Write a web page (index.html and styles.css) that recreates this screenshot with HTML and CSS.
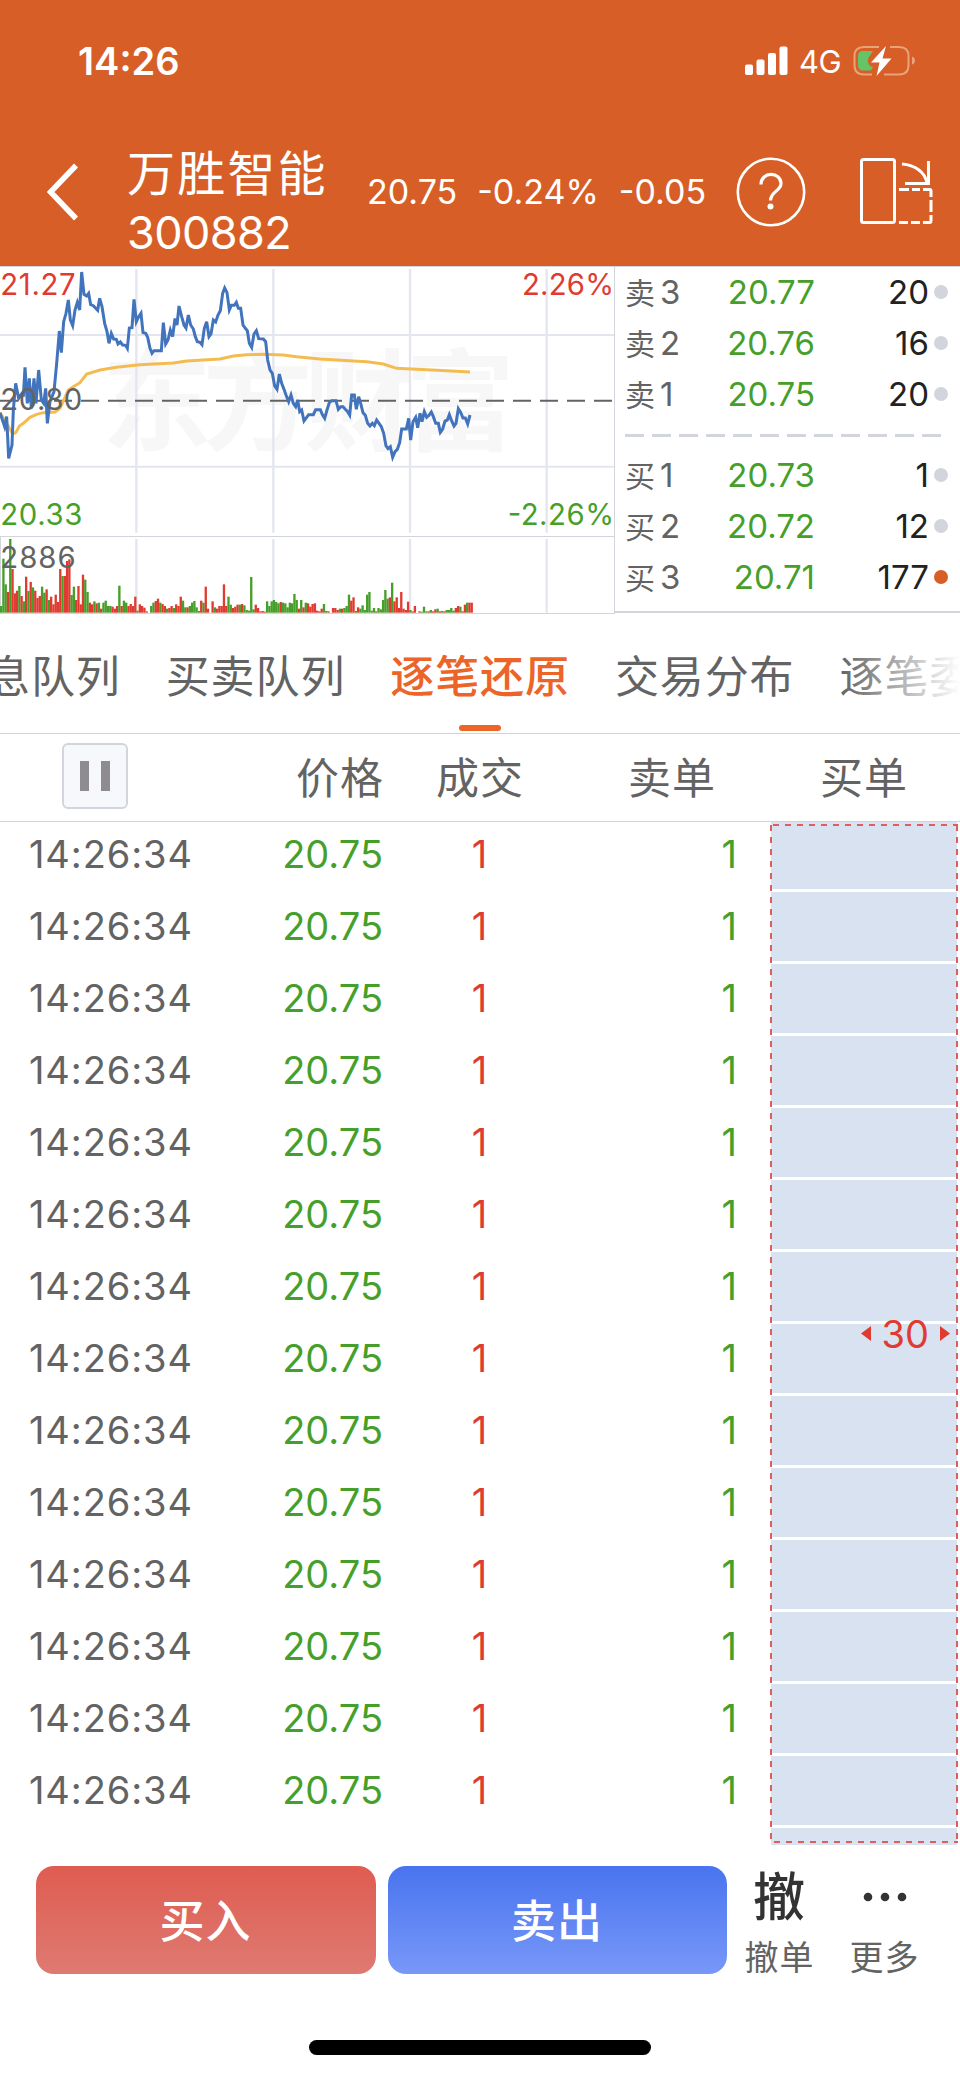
FILE: index.html
```html
<!DOCTYPE html>
<html lang="zh-CN">
    <head>
        <meta charset="UTF-8" />
        <meta name="viewport" content="width=device-width, initial-scale=1.0" />
        <title>万胜智能 300882</title>

        <link rel="stylesheet" href="styles.css">
    </head>

    <body>
        <header>
            <div class="status-bar">
                <span class="clock">14:26</span>
                <div class="status-icons">
                    <svg width="43" height="30" viewBox="0 0 43 30" fill="#fff">
                        <rect x="0" y="18.500" width="8" height="10.500" rx="2" />
                        <rect x="11.500" y="13.500" width="8" height="15.500" rx="2" />
                        <rect x="23" y="7" width="8" height="22" rx="2" />
                        <rect x="34.500" y="0.500" width="8" height="28.500" rx="2" />
                    </svg>
                    <span class="network">4G</span>
                    <svg width="63" height="32" viewBox="0 0 63 32">
                        <path d="M26 2H11Q1.500 2 1.500 11V20Q1.500 29.500 11 29.500H19M31 29.500H46Q55.500 29.500 55.500 20V11Q55.500 2 46 2H37" fill="none" stroke="#e8a27c" stroke-width="2" />
                        <path d="M59 11.500Q62 12.500 62 15.500T59 19.500Z" fill="#e8a27c" />
                        <path d="M10 6H20L16 12Q13 16 17 21L20 22L18 25.500H10Q5 25.500 5 20V11Q5 6 10 6Z" fill="#65c466" />
                        <path d="M33 1L18 17.500H26.500L23.500 31L38.500 13.500H29.500Z" fill="#fff" />
                    </svg>
                </div>
            </div>

            <nav>
                <svg class="back" width="32" height="58" viewBox="0 0 32 58" fill="none" stroke="#fff" stroke-width="5.500">
                    <path d="M29 2.500L3.500 29L29 55.500" />
                </svg>
                <div class="stock">
                    <h1>万胜智能</h1>
                    <p>300882</p>
                </div>
                <div class="quote">
                    <span>20.75</span>
                    <span>-0.24%</span>
                    <span>-0.05</span>
                </div>
                <div class="help">
                    <svg width="70" height="70" viewBox="0 0 70 70" fill="none" stroke="#fff">
                        <circle cx="35" cy="35" r="33.200" stroke-width="2.600" />
                        <path d="M25 27.500C25 14 45 14.500 45 26.500C45 34 34.500 34.500 34.500 43.500" stroke-width="3.200" />
                        <circle cx="34.500" cy="49.500" r="3" fill="#fff" stroke="none" />
                    </svg>
                </div>
                <svg width="73" height="67" viewBox="0 0 73 67" fill="none" stroke="#fff" stroke-width="3">
                    <rect x="1.500" y="1.500" width="33" height="63" rx="2" />
                    <path d="M42 6C55 7 65 14 67 25M68.500 3V25.500H45" />
                    <path d="M39 31.500H49M52 31.500H60M63 31.500H69.500Q71 31.500 71 33V39M71 42V54M71 57V62.500Q71 64.500 69.500 64.500H63M60 64.500H51M48 64.500H39" />
                </svg>
            </nav>
        </header>

        <section class="market">
            <svg class="chart" width="615" height="348" viewBox="0 18 1845 1044">
                <text class="watermark" x="305" y="546" textLength="1240">东方财富</text>
                <g stroke="#e3e6ee" stroke-width="7">
                    <path d="M409 27V818M820 27V818M1230 27V818M1640 27V818" />
                    <path d="M409 837V1058M820 837V1058M1230 837V1058M1640 837V1058" />
                    <path d="M0 225H1842M0 620H1842" stroke-width="6" />
                </g>
                <path d="M0 829.500H1842M0 1060.500H1842M1843.500 18V1062M1.500 829V1060M0 19.500H1845" stroke="#d3d5dd" stroke-width="3" />
                <path d="M0 422.500H1836" stroke="#636363" stroke-width="6" stroke-dasharray="54 27" />
                <g id="volume"></g>
                <polyline class="average" points="0,458 20,490 38,522 48,517 58,498 70,490 90,472 110,463 130,458 165,456 180,445 205,390 220,380 240,368 260,342 300,330 350,322 420,314 520,309 560,303 660,297 700,288 740,284 790,283 850,285 890,290 960,297 1060,303 1100,305 1150,312 1190,325 1250,328 1340,332 1410,336" />
                <polyline class="price-line" points="0,458 14,500 20,470 26,595 36,555 40,450 47,370 56,415 66,400 70,410 75,322 82,430 88,355 94,445 102,355 108,430 116,330 124,420 131,430 137,385 142,490 150,425 162,395 170,310 178,213 184,278 191,185 198,160 205,120 211,180 218,197 225,150 232,127 239,150 245,36 252,103 260,108 266,100 272,134 280,137 293,151 299,115 306,140 314,190 321,215 327,250 334,220 341,237 349,238 354,252 361,246 368,255 377,256 382,265 388,204 396,203 402,118 409,185 415,172 423,160 429,218 437,220 443,232 450,265 456,280 462,272 484,272 490,188 497,252 504,240 511,210 518,230 525,175 531,195 537,138 545,170 552,195 558,204 565,165 572,195 580,207 586,230 592,245 600,247 606,254 613,205 620,185 627,230 633,222 640,180 647,186 654,165 661,152 668,100 674,84 681,98 688,150 694,136 703,136 709,127 715,145 722,145 729,195 736,205 742,212 748,250 755,262 762,222 769,212 776,236 790,237 797,245 803,300 810,330 817,340 824,378 831,388 838,342 845,370 852,388 858,405 866,425 873,405 880,430 887,440 893,420 899,455 905,450 912,483 926,464 940,464 947,449 961,449 967,464 974,475 981,450 988,428 995,422 1008,422 1015,448 1022,440 1029,440 1036,448 1043,455 1049,465 1055,405 1063,405 1069,448 1076,410 1082,430 1089,458 1096,466 1103,490 1110,498 1117,490 1123,497 1130,480 1137,490 1144,500 1151,520 1158,558 1164,566 1171,560 1178,592 1185,575 1192,568 1199,548 1205,507 1219,507 1226,475 1232,540 1239,485 1247,472 1253,503 1260,460 1266,485 1273,455 1280,472 1287,466 1294,456 1300,470 1307,490 1315,490 1321,517 1328,507 1335,483 1342,480 1348,464 1355,483 1362,498 1368,490 1375,446 1382,457 1389,474 1396,474 1403,492 1410,465" />
                <g class="labels">
                    <text x="1" y="104" textLength="226" fill="#e03b31">21.27</text>
                    <text x="1" y="449" textLength="246">20.80</text>
                    <text x="1" y="794" textLength="246" fill="#469f2a">20.33</text>
                    <text x="1" y="923" textLength="226">2886</text>
                    <text x="1566" y="104" textLength="276" fill="#e03b31">2.26%</text>
                    <text x="1523" y="794" textLength="319" fill="#469f2a">-2.26%</text>
                </g>
            </svg>

            <div class="order-book">
                <div class="level"><span class="side">卖</span><span class="num">3</span><span class="price">20.77</span><span class="qty">20</span><i></i></div>
                <div class="level"><span class="side">卖</span><span class="num">2</span><span class="price">20.76</span><span class="qty">16</span><i></i></div>
                <div class="level"><span class="side">卖</span><span class="num">1</span><span class="price">20.75</span><span class="qty">20</span><i></i></div>
                <div class="divider"></div>
                <div class="level"><span class="side">买</span><span class="num">1</span><span class="price">20.73</span><span class="qty">1</span><i></i></div>
                <div class="level"><span class="side">买</span><span class="num">2</span><span class="price">20.72</span><span class="qty">12</span><i></i></div>
                <div class="level"><span class="side">买</span><span class="num">3</span><span class="price">20.71</span><span class="qty">177</span><i class="hot"></i></div>
            </div>
        </section>

        <div class="tabs">
            <span>息队列</span>
            <span>买卖队列</span>
            <span class="active">逐笔还原</span>
            <span>交易分布</span>
            <span>逐笔委</span>
        </div>

        <div class="columns table-head">
            <div class="pause"><b></b><b></b></div>
            <span class="right">价格</span>
            <span>成交</span>
            <span>卖单</span>
            <span>买单</span>
        </div>

        <main>
            <div id="ticks"></div>
            <div class="buy-order">
                <svg width="190" height="1023" fill="none" stroke="#dc5f5b" stroke-width="2">
                    <path d="M3 3H188" stroke-dasharray="6 6" />
                    <path d="M1 3V1020M187 3V1020" stroke-dasharray="6 6" />
                    <path d="M4 1020H188" stroke-dasharray="6 6" />
                </svg>
                <div class="amount">
                    <svg width="10" height="16"><path d="M10 0V15L0 7.500Z" fill="#e03b31" /></svg>
                    <span>30</span>
                    <svg width="10" height="16"><path d="M0 0V15L10 7.500Z" fill="#e03b31" /></svg>
                </div>
            </div>
        </main>

        <footer>
            <div class="trade">
                <button class="buy">买入</button>
                <button class="sell">卖出</button>
                <div class="action">
                    <strong>撤</strong>
                    <span>撤单</span>
                </div>
                <div class="action more">
                    <svg width="44" height="52" viewBox="0 0 44 52" fill="#333">
                        <circle cx="5" cy="26" r="4.300" />
                        <circle cx="22" cy="26" r="4.300" />
                        <circle cx="39" cy="26" r="4.300" />
                    </svg>
                    <span>更多</span>
                </div>
            </div>
            <div class="home-bar"></div>
        </footer>

        <script>
            // positive = red bar, negative = green bar
            const volumes = [
                -20, -162, -85, 62, -221, 131, 58, 66, -80, 50, -34, 108, -65, 92, -76, 66, 44, 50, -78, -60,
                70, -38, 48, 25, 54, 32, 131, -110, 110, 155, 160, -53, -78, 38, 80, 25, 114, -99, -62, 30,
                25, -34, 28, -30, 12, -30, -36, -20, -20, 18, 12, 20, -81, 20, -36, -30, 20, 26, 20, 48,
                -6, 25, 20, 15, 4, 0, -20, -30, 35, 42, -30, 26, 20, -12, 14, 20, -14, 25, 20, 48,
                -36, -16, 16, -20, -30, -35, -16, -5, 36, -30, 78, 12, 0, 34, -16, 12, 20, 20, 85, 20,
                -48, -24, 14, 18, 24, -24, 26, -22, -8, -6, -107, -10, 24, 14, 4, 5, 3, -34, -20, -34,
                -38, -32, -28, 32, -30, -28, -16, -30, -28, -56, -38, 12, -38, 16, -30, 28, 18, 26, 28, 6,
                4, 12, -26, -5, 4, 0, 14, 14, 8, -12, 12, -14, -20, -54, 36, 46, -5, 16, -12, -22,
                -8, -54, -62, -6, -14, 4, -14, -10, -38, -68, -42, 46, -90, 34, 46, 14, 62, 12, 8, 33,
                -8, 4, 20, 0, 4, -3, -18, -4, 4, -8, 4, 10, -12, 4, -5, 4, -8, -8, -14, -6,
                14, 20, -18, 4, 24, -30, 30, 30
            ];
            const volume = document.querySelector('#volume');
            const ticks = document.querySelector('#ticks');

            volume.innerHTML = volumes
                .map((v, i) => {
                    const h = Math.abs(v);
                    const color = v > 0 ? '#e03b31' : '#469f2a';
                    return `<rect x="${(i * 6.82).toFixed(1)}" y="${1058 - h}" width="7" height="${h}" fill="${color}" />`;
                })
                .join('');

            for (let i = 0; i < 14; i++) {
                ticks.innerHTML += `
                    <div class="tick">
                        <span class="time">14:26:34</span>
                        <span class="price">20.75</span>
                        <span class="deal">1</span>
                        <span class="sell-order">1</span>
                    </div>`;
            }
        </script>
    </body>
</html>
```
FILE: styles.css
```css
* {
    margin: 0;
    padding: 0;
    box-sizing: border-box;
}

body {
    width: 960px;
    height: 2079px;
    overflow: hidden;
    background-color: #fff;
    color: #636363;
    font-family: Inter, "Noto Sans CJK SC", sans-serif;
    font-weight: 400;
}

svg {
    display: block;
    flex: none;
}

header {
    height: 266px;
    background-color: #d75f27;
    color: #fff;
}

.status-bar {
    height: 122px;
    padding: 0 44px 0 78px;
    display: flex;
    align-items: center;
    justify-content: space-between;
}

.clock {
    font-size: 38px;
    font-weight: 600;
}

.status-icons {
    display: flex;
    align-items: center;
}

.network {
    width: 41px;
    margin: 0 13px 0 11px;
    font-size: 31px;
    letter-spacing: -0.5px;
}

nav {
    height: 144px;
    padding-left: 47px;
    display: flex;
    align-items: center;
}

nav svg {
    margin-top: -5px;
}

.stock {
    width: 240px;
    margin-left: 48px;
    padding-top: 18px;
}

.stock h1 {
    font-size: 48px;
    font-weight: 400;
    line-height: 60px;
    letter-spacing: 2.2px;
}

.stock p {
    font-size: 45px;
    line-height: 58px;
    letter-spacing: -0.6px;
}

.quote {
    width: 368px;
    margin-top: -5px;
    display: flex;
    gap: 20px;
    font-size: 34px;
    letter-spacing: 0;
    white-space: nowrap;
}

.help {
    margin: 0 54px 0 1px;
}

.market {
    height: 348px;
    display: flex;
}

.watermark {
    font-size: 330px;
    font-weight: 700;
    fill: #f7f7f7;
}

.average {
    fill: none;
    stroke: #f4bc50;
    stroke-width: 9;
}

.price-line {
    fill: none;
    stroke: #4273bd;
    stroke-width: 9;
}

.labels {
    font-size: 88px;
    fill: #636363;
}

.order-book {
    flex: 1;
    height: 347px;
    border-top: 1px solid #d3d5dd;
    border-bottom: 2px solid #d3d5dd;
}

.level {
    height: 51px;
    padding: 0 12px 1px 10px;
    display: flex;
    align-items: center;
    font-size: 33px;
}

.side {
    width: 35px;
    padding-bottom: 2px;
    font-size: 30px;
}

.num {
    width: 40px;
}

.order-book .price {
    width: 115px;
    text-align: right;
}

.qty {
    flex: 1;
    text-align: right;
    color: #222;
}

.level i {
    width: 14px;
    height: 14px;
    margin-left: 5px;
    border-radius: 50%;
    background-color: #d3d5dd;
}

.level .hot {
    background-color: #d75f27;
}

.divider {
    height: 3px;
    margin: 14px 19px 13px 10px;
    background: repeating-linear-gradient(90deg, #d3d5dd 0 19px, transparent 19px 27px);
}

.tabs {
    height: 120px;
    border-bottom: 1px solid #d3d3d3;
    display: flex;
    gap: 45px;
    overflow: hidden;
    position: relative;
    font-size: 44px;
    line-height: 126px;
    letter-spacing: 0.9px;
    white-space: nowrap;
}

.tabs span {
    flex: none;
}

.tabs span:first-child {
    margin-left: -14px;
}

.tabs .active {
    color: #ec6428;
    font-weight: 500;
    position: relative;
}

.tabs .active::after {
    content: "";
    position: absolute;
    left: 69px;
    top: 111px;
    width: 42px;
    height: 6px;
    border-radius: 3px;
    background-color: #ec6428;
}

/* fades out the tab that runs off the screen */
.tabs::after {
    content: "";
    position: absolute;
    right: 0;
    top: 0;
    width: 120px;
    height: 100%;
    background: linear-gradient(90deg, rgba(255, 255, 255, 0), #fff);
}

.columns {
    display: grid;
    grid-template-columns: repeat(5, 192px);
    align-items: center;
    text-align: center;
}

.table-head {
    height: 88px;
    padding-bottom: 4px;
    border-bottom: 1px solid #d3d3d3;
    font-size: 43px;
    letter-spacing: 1px;
}

.table-head span {
    margin-top: -2px;
}

.right {
    text-align: right;
}

.pause {
    width: 66px;
    height: 66px;
    margin-left: 62px;
    border: 2px solid #d3d5dd;
    border-radius: 6px;
    background-color: #f7f8fb;
    display: flex;
    align-items: center;
    justify-content: center;
    gap: 12px;
}

.pause b {
    width: 9px;
    height: 30px;
    background-color: #8e8c91;
}

main {
    height: 1023px;
    display: flex;
}

#ticks {
    width: 771px;
    margin-top: -4px;
}

.tick {
    height: 72px;
    display: grid;
    grid-template-columns: 192px 192px 192px 192px;
    align-items: center;
    font-size: 38px;
}

.time {
    padding-left: 29px;
    letter-spacing: 0.9px;
}

.tick .price {
    padding-right: 1px;
    text-align: right;
}

.price,
.sell-order {
    color: #469f2a;
}

.deal {
    padding-right: 1px;
    text-align: center;
    color: #e03b31;
}

.sell-order {
    padding-right: 31px;
    text-align: right;
}

.buy-order {
    width: 186px;
    position: relative;
    background: repeating-linear-gradient(#d9e2f0 0 69px, #fff 69px 72px) 0 -2px;
    background-size: 186px 1100px;
}

.buy-order > svg {
    position: absolute;
    left: -1px;
    top: 0;
}

.amount {
    position: absolute;
    right: 7px;
    top: 489px;
    display: flex;
    align-items: center;
    gap: 11px;
    color: #e03b31;
    font-size: 38px;
}

footer {
    height: 234px;
    padding-top: 21px;
}

.trade {
    height: 108px;
    padding-left: 36px;
    display: flex;
}

button {
    width: 340px;
    height: 108px;
    margin-right: 12px;
    padding: 0 1px 3px 0;
    border: none;
    border-radius: 18px;
    color: #fff;
    font-family: inherit;
    font-size: 45px;
    font-weight: 500;
    letter-spacing: 1px;
}

.buy {
    background: linear-gradient(#df5c50, #de7a72);
}

.sell {
    width: 339px;
    background: linear-gradient(#4974ef, #7898f8);
}

.action {
    width: 81px;
    display: flex;
    flex-direction: column;
    align-items: center;
    font-size: 34px;
    letter-spacing: 1px;
    white-space: nowrap;
}

.action strong {
    height: 62px;
    color: #333;
    font-size: 52px;
    font-weight: 500;
    line-height: 64px;
}

.action svg {
    margin: 5px 0;
}

.action span {
    line-height: 60px;
}

.more {
    margin-left: 24px;
}

.home-bar {
    width: 342px;
    height: 15px;
    margin: 66px auto 0;
    border-radius: 8px;
    background-color: #000;
}
```
